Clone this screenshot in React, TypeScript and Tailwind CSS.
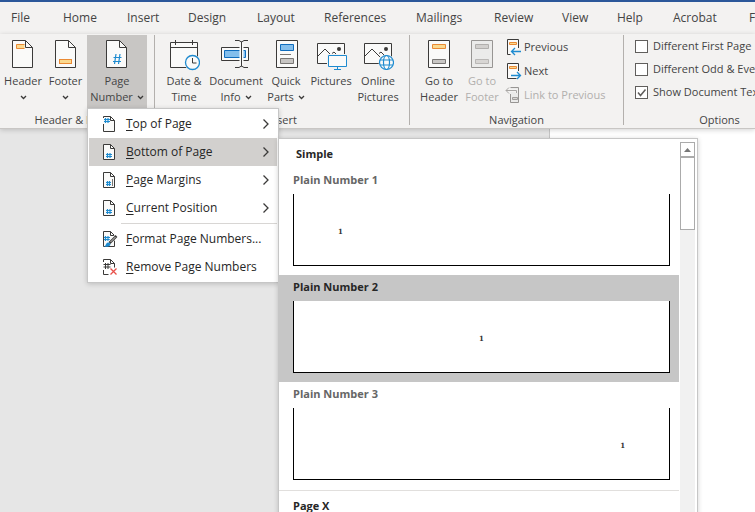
import React from 'react';
import clsx from 'clsx';

type IconProps = { children: React.ReactNode };

const INK = '#3b3a39';
const PAPER = '#fafaf9';
const BLUE = '#1e8bd0';

const tabs = [
  { name: 'File', width: 'w-[52px]' },
  { name: 'Home', width: 'w-16' },
  { name: 'Insert', width: 'w-[61px]' },
  { name: 'Design', width: 'w-[69px]' },
  { name: 'Layout', width: 'w-[67px]' },
  { name: 'References', width: 'w-[92px]' },
  { name: 'Mailings', width: 'w-[78px]' },
  { name: 'Review', width: 'w-[68px]' },
  { name: 'View', width: 'w-[55px]' },
  { name: 'Help', width: 'w-14' },
  { name: 'Acrobat', width: 'w-[76px]' },
  { name: 'Format', width: 'w-16' },
];

const LargeIcon = ({ children }: IconProps) => (
  <svg width="32" height="32" viewBox="0 0 32 32" fill="none" className="shrink-0" aria-hidden="true">
    {children}
  </svg>
);

const SmallIcon = ({ children }: IconProps) => (
  <svg
    width="16"
    height="16"
    viewBox="0 0 16 16"
    fill="none"
    className="shrink-0 overflow-visible"
    aria-hidden="true"
  >
    {children}
  </svg>
);

const LargePage = () => (
  <>
    <path d="M5.5 1.5h13l7 7v20h-20z" fill={PAPER} stroke={INK} />
    <path d="M18.5 1.5v7h7" stroke={INK} />
  </>
);

const HeaderIcon = () => (
  <LargeIcon>
    <LargePage />
    <path d="M17.5 5.5h-8v4h8" fill="#fbd98f" stroke="#ea8a34" />
  </LargeIcon>
);

const FooterIcon = () => (
  <LargeIcon>
    <LargePage />
    <rect x="9.5" y="20.5" width="12" height="4" fill="#fbd98f" stroke="#ea8a34" />
  </LargeIcon>
);

const PageNumberIcon = () => (
  <LargeIcon>
    <LargePage />
    <path d="M15 15l-1.5 10M19 15l-1.5 10M12.5 18.5h8M12 22.5h8" stroke={BLUE} strokeWidth="1.2" />
  </LargeIcon>
);

const DateIcon = () => (
  <LargeIcon>
    <path d="M2.5 3.5h27v25h-27z" fill={PAPER} stroke={INK} />
    <path d="M2.5 8.5h27M7.5 1v5M24.5 1v5" stroke={INK} />
    <circle cx="24.5" cy="23.5" r="8" fill="#f3f2f1" />
    <circle cx="24.5" cy="23.5" r="7" fill={PAPER} stroke={BLUE} strokeWidth="1.3" />
    <path d="M24.5 19v5h4" stroke={INK} />
  </LargeIcon>
);

const DocumentInfoIcon = () => (
  <LargeIcon>
    <path d="M1.5 8.5h27v13h-27z" fill={PAPER} stroke={INK} />
    <path d="M4.5 11.5h21v7h-21z" fill="#83beec" stroke="#0f6cbd" />
    <path d="M21.5 4v22" stroke={PAPER} strokeWidth="4" />
    <path d="M15 1.5h4l2.5 1.5l2.5 -1.5h4M15 28.5h4l2.5 -1.5l2.5 1.5h4M21.5 2.5v25" stroke={INK} />
  </LargeIcon>
);

const QuickPartsIcon = () => (
  <LargeIcon>
    <path d="M6.5 1.5h21v27h-21z" fill={PAPER} stroke={INK} />
    <path d="M10.5 5.5h13v6h-13z" fill="#83beec" stroke="#0f6cbd" />
    <path d="M10 15.5h11" stroke="#797775" />
    <path d="M10.5 19.5h13v5h-13z" fill="#c8c6c4" stroke="#797775" />
  </LargeIcon>
);

const Photo = () => (
  <>
    <path d="M2.5 4.5h27v20h-27z" fill={PAPER} stroke={INK} />
    <path d="M2.5 17.5l7.5 -7.5l8.5 8.5M17 14.5l2 -1.5l3 3" stroke={INK} />
    <circle cx="24" cy="10" r="2" fill={INK} />
  </>
);

const PicturesIcon = () => (
  <LargeIcon>
    <Photo />
    <path d="M12 15h20v17h-20z" fill="#f3f2f1" />
    <path d="M13.5 16.5h18v11h-18z" fill={PAPER} stroke={BLUE} />
    <path d="M22.5 27.5v3M19 30.5h7" stroke={BLUE} />
  </LargeIcon>
);

const OnlinePicturesIcon = () => (
  <LargeIcon>
    <Photo />
    <circle cx="24.5" cy="23.5" r="8" fill="#f3f2f1" />
    <g stroke={BLUE} strokeWidth="1.2">
      <circle cx="24.5" cy="23.5" r="7" fill={PAPER} />
      <ellipse cx="24.5" cy="23.5" rx="3" ry="7" />
      <path d="M18 21h13M18 26h13" />
    </g>
  </LargeIcon>
);

const GoToHeaderIcon = () => (
  <LargeIcon>
    <path d="M5.5 1.5h21v27h-21z" fill={PAPER} stroke={INK} />
    <path d="M9.5 5.5h13v4h-13z" fill="#fbd98f" stroke="#ea8a34" />
    <path d="M9.5 20.5h13v4h-13z" fill="#c8c6c4" stroke="#797775" />
  </LargeIcon>
);

const GoToFooterIcon = () => (
  <LargeIcon>
    <path d="M5.5 1.5h21v27h-21z" fill="#ebebea" stroke="#979593" />
    <path d="M9.5 5.5h13v4h-13z" fill="#d2d0ce" stroke="#b1afad" />
    <path d="M9.5 20.5h13v4h-13z" fill="#d8d6d4" stroke="#b9b7b5" />
  </LargeIcon>
);

const PreviousIcon = () => (
  <SmallIcon>
    <path d="M12.5 9V.5h-11v15h3" fill={PAPER} stroke={INK} />
    <path d="M3.5 3.5h7v2h-7z" fill="#fbd98f" stroke="#ea8a34" />
    <path d="M15 12.5H5.5M9 9l-3.5 3.5l3.5 3.5" stroke={BLUE} strokeWidth="1.3" />
  </SmallIcon>
);

const NextIcon = () => (
  <SmallIcon>
    <path d="M12.5 8V.5h-11v15h9" fill={PAPER} stroke={INK} />
    <path d="M3.5 3.5h7v2h-7z" fill="#fbd98f" stroke="#ea8a34" />
    <path d="M5 12.5h9.5M11 9l3.5 3.5l-3.5 3.5" stroke={BLUE} strokeWidth="1.3" />
  </SmallIcon>
);

const LinkIcon = () => (
  <SmallIcon>
    <path d="M4.5 .5h8v15h-8V7" fill="#ebebea" stroke="#979593" />
    <path d="M6.5 10.5h5v2h-5z" fill="#d8d6d4" stroke="#a19f9d" />
    <path d="M10.5 6V3.5H0M3 .5l-3 3l3 3" stroke="#f3f2f1" strokeWidth="3" />
    <path d="M10.5 6V3.5H0M3 .5l-3 3l3 3" stroke="#a9a7a5" />
  </SmallIcon>
);

const SmallPage = () => (
  <>
    <path d="M.5 .5h7l4 4v11h-11z" fill={PAPER} stroke={INK} />
    <path d="M7.5 .5v4h4" stroke={INK} />
  </>
);

const TopIcon = () => (
  <SmallIcon>
    <path d="M.5 .5h7l4 4v11h-11z" fill={PAPER} />
    <path d="M.5 8v7.5h11v-11l-4 -4H.5v1.5M7.5 .5v4h4" stroke={INK} />
    <path d="M2.5 2v5M5 2v5M1 3.5h6M1 5.5h6" stroke={BLUE} strokeWidth="1.2" />
  </SmallIcon>
);

const BottomIcon = () => (
  <SmallIcon>
    <SmallPage />
    <path d="M4.5 9v5M7 9v5M3 10.5h6M3 12.5h6" stroke={BLUE} strokeWidth="1.2" />
  </SmallIcon>
);

const MarginsIcon = () => (
  <SmallIcon>
    <SmallPage />
    <path d="M4.5 9v5M6.5 9v5M3 10.5h5M3 12.5h5" stroke={BLUE} strokeWidth="1.2" />
    <path d="M9.5 7v7" stroke="#797775" />
  </SmallIcon>
);

const FormatIcon = () => (
  <SmallIcon>
    <SmallPage />
    <path d="M2.5 5v5M5 5v5M1 6.5h6M1 8.5h6" stroke={BLUE} strokeWidth="1.2" />
    <path d="M13 5.5L6 12" stroke={PAPER} strokeWidth="4" />
    <path d="M13.5 5L6.5 12" stroke={INK} strokeWidth="2.5" />
    <path d="M12.5 6L7.5 11" stroke="#d2d0ce" />
    <path d="M1 15.5c2 0 1.5-3.5 4-4c2.5 0 3 2 2 3c-1.5 1.5-4 1.5-6 1z" fill={BLUE} />
  </SmallIcon>
);

const RemoveIcon = () => (
  <SmallIcon>
    <path d="M.5 3V.5h7l4 4v4M.5 11v4.5h5" stroke={INK} />
    <path d="M7.5 .5v4h4" stroke={INK} />
    <path d="M2.5 4v6M5 4v6M.5 5.5h7M.5 8h7" stroke={INK} />
    <path d="M7.5 9.5l6 6M13.5 9.5l-6 6" stroke="#e8504a" strokeWidth="1.3" />
  </SmallIcon>
);

const Chevron = () => (
  <svg width="7" height="5" viewBox="0 0 7 5" fill="none" className="inline-block" aria-hidden="true">
    <path d="M1 1l2.5 2.5l2.5 -2.5" stroke={INK} strokeWidth="1.3" />
  </svg>
);

type LargeButtonProps = {
  icon: React.ReactNode;
  top: string;
  bottom?: string;
  menu?: boolean;
  active?: boolean;
  disabled?: boolean;
  width: string;
};

const LargeButton = ({ icon, top, bottom, menu, active, disabled, width }: LargeButtonProps) => (
  <button
    type="button"
    disabled={disabled}
    className={clsx(
      'flex h-[74px] shrink-0 flex-col items-center pt-1 leading-4 whitespace-nowrap',
      width,
      active && 'bg-[#c8c6c4]',
      disabled && 'text-[#b1afad]'
    )}
  >
    {icon}
    <span className="mt-0.5">{top}</span>
    <span className="flex h-4 items-center gap-1">
      {bottom}
      {menu && <Chevron />}
    </span>
  </button>
);

type SmallButtonProps = { icon: React.ReactNode; label: string; disabled?: boolean };

const SmallButton = ({ icon, label, disabled }: SmallButtonProps) => (
  <button
    type="button"
    disabled={disabled}
    className={clsx('flex h-6 items-center gap-0.5 whitespace-nowrap', disabled && 'text-[#b1afad]')}
  >
    {icon}
    {label}
  </button>
);

type OptionProps = { id: string; label: string; checked?: boolean };

const Option = ({ id, label, checked }: OptionProps) => (
  <div className="flex h-[23px] items-center gap-[5px]">
    <span className="relative flex">
      <input
        id={id}
        type="checkbox"
        defaultChecked={checked}
        className="peer size-[13px] appearance-none border border-[#605e5c] bg-white"
      />
      <svg
        viewBox="0 0 13 13"
        fill="none"
        className="pointer-events-none absolute inset-0 hidden size-[13px] peer-checked:block"
        aria-hidden="true"
      >
        <path d="M3 6.5l2.5 3l5 -6" stroke="#605e5c" strokeWidth="1.5" />
      </svg>
    </span>
    <label htmlFor={id} className="whitespace-nowrap">
      {label}
    </label>
  </div>
);

type GroupProps = { title: string; width: string; padding: string; children: React.ReactNode };

const Group = ({ title, width, padding, children }: GroupProps) => (
  <section className={clsx('flex h-[90px] shrink-0 flex-col border-r border-[#b3b0ad]', width)}>
    <div className={clsx('flex h-[76px] shrink-0', padding)}>{children}</div>
    <h2 className="text-center leading-[18px]">{title}</h2>
  </section>
);

type MenuItemProps = { icon: React.ReactNode; label: string; submenu?: boolean; active?: boolean };

const MenuItem = ({ icon, label, submenu, active }: MenuItemProps) => (
  <button
    type="button"
    role="menuitem"
    className={clsx(
      'flex h-7 w-full items-center gap-[7px] pr-2 pl-3.5 text-left whitespace-nowrap',
      active && 'bg-[#d2d0ce]'
    )}
  >
    {icon}
    <span className="grow">
      <span className="underline underline-offset-2">{label[0]}</span>
      {label.slice(1)}
    </span>
    {submenu && (
      <svg width="6" height="10" viewBox="0 0 6 10" fill="none" aria-hidden="true">
        <path d="M.5 .5l4.5 4.5l-4.5 4.5" stroke={INK} strokeWidth="1.3" />
      </svg>
    )}
  </button>
);

type GalleryItemProps = { label: string; align: string; active?: boolean };

const GalleryItem = ({ label, align, active }: GalleryItemProps) => (
  <button
    type="button"
    className={clsx(
      'flex w-full flex-col pr-[9px] pb-[9px] pl-3.5 text-left font-bold',
      active ? 'bg-[#c6c6c6] text-[#262626]' : 'text-[#666]'
    )}
  >
    <span className="h-[26px] leading-6">{label}</span>
    <span
      className={clsx(
        'flex h-[72px] w-full items-center border-x border-b border-black bg-white px-11 pt-1 font-["DejaVu_Serif",serif] text-[7px] text-[#333]',
        align
      )}
    >
      1
    </span>
  </button>
);

const Gallery = () => (
  <div className="absolute top-[29px] left-full flex h-[420px] w-[420px] border border-[#c6c6c6] bg-white text-[11px] shadow-[0_1px_5px_rgba(0,0,0,0.18)]">
    <div className="grow">
      <h3 className="h-[29px] pl-[17px] leading-[30px] font-bold text-[#262626]">Simple</h3>
      <GalleryItem label="Plain Number 1" align="justify-start" />
      <GalleryItem label="Plain Number 2" align="justify-center" active />
      <GalleryItem label="Plain Number 3" align="justify-end" />
      <h3 className="mt-px border-t border-[#e1dfdd] pl-3.5 leading-[30px] font-bold text-[#262626]">
        Page X
      </h3>
    </div>
    <div className="mt-[3px] mr-0.5 ml-px w-[15px] shrink-0 bg-[#f1f1f1]">
      <button
        type="button"
        aria-label="Scroll up"
        className="flex h-[15px] w-full items-center justify-center border border-[#ababab] bg-white"
      >
        <svg width="7" height="4" viewBox="0 0 7 4" aria-hidden="true">
          <path d="M3.5 0L7 4H0z" fill="#777" />
        </svg>
      </button>
      <div className="h-[73px] border border-[#ababab] bg-white" />
    </div>
  </div>
);

const PageNumberMenu = () => (
  <div
    role="menu"
    className="absolute top-[73px] left-0 z-10 w-48 border border-[#c6c6c6] bg-white p-px text-xs text-[#262626] shadow-[0_1px_5px_rgba(0,0,0,0.18)]"
  >
    <MenuItem icon={<TopIcon />} label="Top of Page" submenu />
    <MenuItem icon={<BottomIcon />} label="Bottom of Page" submenu active />
    <MenuItem icon={<MarginsIcon />} label="Page Margins" submenu />
    <MenuItem icon={<BottomIcon />} label="Current Position" submenu />
    <hr className="my-px ml-8 border-[#d8d6d4]" />
    <MenuItem icon={<FormatIcon />} label="Format Page Numbers..." />
    <MenuItem icon={<RemoveIcon />} label="Remove Page Numbers" />
    <Gallery />
  </div>
);

const Ribbon = () => (
  <div className="relative z-10 flex h-[95px] border-b border-[#c8c6c4] bg-[#f3f2f1] pt-px shadow-[0_1px_5px_rgba(0,0,0,0.18)]">
    <Group title="Header & Footer" width="w-[155px]" padding="pl-0.5">
      <LargeButton icon={<HeaderIcon />} top="Header" menu width="w-[42px]" />
      <LargeButton icon={<FooterIcon />} top="Footer" menu width="w-[43px]" />
      <div className="relative">
        <LargeButton icon={<PageNumberIcon />} top="Page" bottom="Number" menu active width="w-[60px]" />
        <PageNumberMenu />
      </div>
    </Group>
    <Group title="Insert" width="w-[255px]" padding="pl-1">
      <LargeButton icon={<DateIcon />} top="Date &" bottom="Time" width="w-[50px]" />
      <LargeButton icon={<DocumentInfoIcon />} top="Document" bottom="Info" menu width="w-[54px]" />
      <LargeButton icon={<QuickPartsIcon />} top="Quick" bottom="Parts" menu width="w-[46px]" />
      <LargeButton icon={<PicturesIcon />} top="Pictures" width="w-11" />
      <LargeButton icon={<OnlinePicturesIcon />} top="Online" bottom="Pictures" width="w-[50px]" />
    </Group>
    <Group title="Navigation" width="w-[214px]" padding="pl-2">
      <LargeButton icon={<GoToHeaderIcon />} top="Go to" bottom="Header" width="w-[42px]" />
      <LargeButton icon={<GoToFooterIcon />} top="Go to" bottom="Footer" width="w-11" disabled />
      <div className="ml-0.5">
        <SmallButton icon={<PreviousIcon />} label="Previous" />
        <SmallButton icon={<NextIcon />} label="Next" />
        <SmallButton icon={<LinkIcon />} label="Link to Previous" disabled />
      </div>
    </Group>
    <Group title="Options" width="w-[192px]" padding="pl-[11px]">
      <div>
        <Option id="first-page" label="Different First Page" />
        <Option id="odd-even" label="Different Odd & Even Pages" />
        <Option id="document-text" label="Show Document Text" checked />
      </div>
    </Group>
  </div>
);

const App = () => {
  return (
    <div className="flex h-screen flex-col overflow-hidden bg-[#e6e6e6] font-['Open_Sans','Noto_Sans',sans-serif] text-[11px] text-[#444]">
      <header className="border-t-2 border-[#2b579a] bg-[#f3f2f1]">
        <nav className="flex h-8 items-center pl-[11px] text-xs">
          {tabs.map((tab) => (
            <button key={tab.name} type="button" className={clsx('shrink-0 text-left', tab.width)}>
              {tab.name}
            </button>
          ))}
        </nav>
      </header>
      <Ribbon />
      <main className="flex grow">
        <div className="w-[549px] shrink-0" />
        <div className="grow border-l border-[#c6c6c6] bg-white" />
      </main>
    </div>
  );
};

export default App;
